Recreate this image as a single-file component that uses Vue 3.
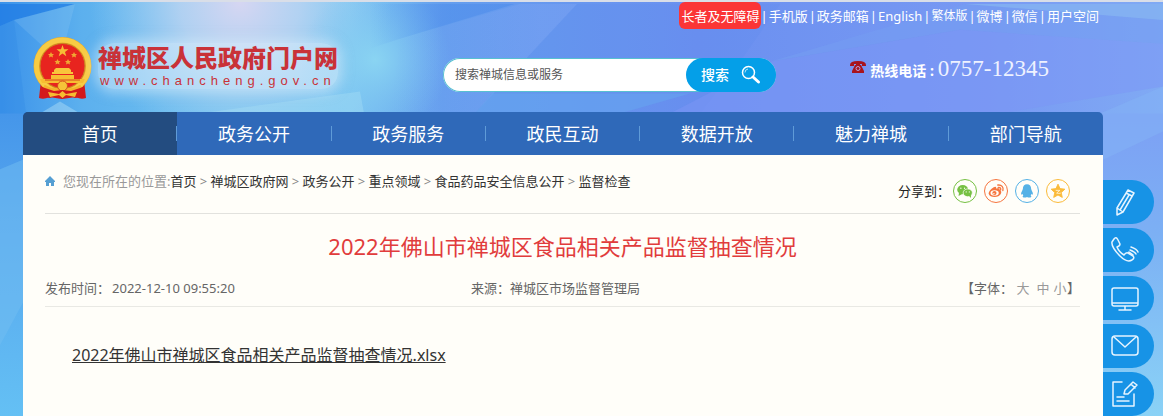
<script setup>
import { ref } from 'vue'

const keyword = ref('')
const topLinks = [
  { text: '手机版' },
  { text: '政务邮箱' },
  { text: 'English' },
  { text: '繁体版', small: true },
  { text: '微博' },
  { text: '微信' },
  { text: '用户空间' },
]
const navItems = ['首页', '政务公开', '政务服务', '政民互动', '数据开放', '魅力禅城', '部门导航']
const crumbs = ['首页', '禅城区政府网', '政务公开', '重点领域', '食品药品安全信息公开', '监督检查']
</script>

<template>
  <div class="page">
    <svg class="backdrop" viewBox="0 0 1163 416" preserveAspectRatio="none" aria-hidden="true">
      <defs>
        <linearGradient id="sky" x1="0" y1="0" x2="1" y2="0">
          <stop offset="0" stop-color="#3b92ea" />
          <stop offset="0.07" stop-color="#5cb0ee" />
          <stop offset="0.2" stop-color="#74c4f0" />
          <stop offset="0.3" stop-color="#7cc6f2" />
          <stop offset="0.38" stop-color="#649eee" />
          <stop offset="0.6" stop-color="#6b90f0" />
          <stop offset="0.85" stop-color="#7899f3" />
          <stop offset="1" stop-color="#80aaf4" />
        </linearGradient>
        <radialGradient id="lilac" cx="240" cy="0" r="150" gradientUnits="userSpaceOnUse">
          <stop offset="0" stop-color="#d6d6f2" />
          <stop offset="0.4" stop-color="#bcd4f2" stop-opacity="0.85" />
          <stop offset="1" stop-color="#a0d0f2" stop-opacity="0" />
        </radialGradient>
        <radialGradient id="aqua" cx="375" cy="58" r="75" gradientUnits="userSpaceOnUse">
          <stop offset="0" stop-color="#8ad4f2" />
          <stop offset="1" stop-color="#7cc4f0" stop-opacity="0" />
        </radialGradient>
        <linearGradient id="facetFade" x1="390" y1="0" x2="540" y2="0" gradientUnits="userSpaceOnUse">
          <stop offset="0" stop-color="#80a6f4" stop-opacity="0" />
          <stop offset="1" stop-color="#80a6f4" stop-opacity="0.35" />
        </linearGradient>
        <linearGradient id="cornerFade" x1="370" y1="0" x2="450" y2="0" gradientUnits="userSpaceOnUse">
          <stop offset="0" stop-color="#4486ea" stop-opacity="0" />
          <stop offset="1" stop-color="#4486ea" stop-opacity="0.4" />
        </linearGradient>
        <linearGradient id="leftEdge" x1="0" y1="0" x2="0" y2="1">
          <stop offset="0" stop-color="#4596ea" />
          <stop offset="0.4" stop-color="#58a8ee" />
          <stop offset="1" stop-color="#64c0f4" />
        </linearGradient>
        <linearGradient id="rightEdge" x1="0" y1="0" x2="0" y2="1">
          <stop offset="0" stop-color="#7da0f4" />
          <stop offset="0.4" stop-color="#7cb0f4" />
          <stop offset="1" stop-color="#8ad2f6" />
        </linearGradient>
      </defs>
      <rect width="1163" height="416" fill="url(#sky)" />
      <rect y="112" width="24" height="304" fill="url(#leftEdge)" />
      <rect x="1100" y="112" width="63" height="304" fill="url(#rightEdge)" />
      <rect width="480" height="160" fill="url(#lilac)" />
      <rect x="290" width="180" height="140" fill="url(#aqua)" />
      <path d="M0 2H75L14 18L0 24Z" fill="#1b78e4" opacity="0.65" />
      <path d="M14 18L75 2L60 60Z" fill="#9fd4f6" opacity="0.2" />
      <path d="M0 24L14 18L26 112H0Z" fill="#2f88e6" opacity="0.3" />
      <path d="M60 100L80 112H40Z" fill="#bfe6f8" opacity="0.4" />
      <path d="M200 112L360 90L364 112Z" fill="#a8def4" opacity="0.4" />
      <path d="M400 37L520 2H577L475 112H390Z" fill="url(#facetFade)" />
      <path d="M577 2L475 112H700L740 60L780 2Z" fill="#5a86ee" opacity="0.15" />
      <path d="M360 2H515L400 37L360 50Z" fill="url(#cornerFade)" />
      <path d="M475 112L492 92H690L620 112Z" fill="#66a8f0" opacity="0.5" />
      <path d="M770 60L965 2H1163V42L960 28Z" fill="#749cf2" opacity="0.6" />
      <path d="M770 60L960 28L1163 42V85L1000 112H670Z" fill="#7b96f5" opacity="0.5" />
      <path d="M965 2L1163 18V2Z" fill="#8abaf2" opacity="0.6" />
      <path d="M1163 85L1100 112V160L1163 130Z" fill="#84b4f6" opacity="0.5" />
      <path d="M0 168L24 158V300L0 345Z" fill="#72bdf2" opacity="0.5" />
    </svg>

    <header class="header">
      <nav class="topbar" aria-label="快捷入口">
        <a class="care" href="#">长者及无障碍</a>
        <template v-for="link in topLinks" :key="link.text">
          <span class="bar">|</span>
          <a href="#" :class="{ small: link.small }">{{ link.text }}</a>
        </template>
      </nav>

      <div class="brand-row">
        <a class="brand" href="#">
          <svg class="emblem" viewBox="0 0 62 62" aria-hidden="true">
            <path d="M9 43L7 61Q12 63 17 60L30 62L44 60Q49 63 54 61L52 43Z" fill="#d3191c" />
            <path d="M10 45L13 60M50 45L48 60" stroke="#9c1416" stroke-width="1" />
            <circle cx="30.500" cy="29" r="29" fill="#eaa92b" />
            <circle cx="30.500" cy="29" r="26" fill="none" stroke="#f8cc44" stroke-width="5" />
            <circle cx="30.500" cy="29" r="22.500" fill="#e8241f" stroke="#c98420" />
            <path d="M30.500 8L32 12.300H36.500L33 15L34.300 19.200L30.500 16.600L26.700 19.200L28 15L24.500 12.300H29Z" fill="#f6bd35" />
            <path d="M19 15l1 2h2l-1.500 1.500.5 2-2-1-2 1 .5-2L16 17h2ZM42 15l1 2h2l-1.500 1.500.5 2-2-1-2 1 .5-2L39 17h2ZM25.500 22l1 2h2L27 25.500l.5 2-2-1-2 1 .5-2L22.500 24h2ZM36 22l1 2h2l-1.500 1.500.5 2-2-1-2 1 .5-2L33 24h2Z" fill="#f0a733" />
            <path d="M22 33L24 31H37L39 33V35H41V37H20V35H22Z" fill="#f9c53b" />
            <path d="M19 38H42V42H53L51 46H10L8 42H19Z" fill="#f7bd32" />
            <path d="M13 43H48" stroke="#d64a1d" stroke-width="1" />
            <path d="M12 49Q24 56 30.500 50Q37 56 49 49" fill="none" stroke="#f4b32c" stroke-width="3" />
            <circle cx="30.500" cy="49" r="5" fill="#f5c338" stroke="#d8491e" />
            <path d="M10 50L22 54L30.500 53L39 54L51 50L50 60L43 61L34 57L30.500 59L27 57L18 61L11 60Z" fill="#d3191c" />
            <path d="M16 55L27 57L30.500 54L34 57L45 55L43 60L34 58L30.500 61L27 58L18 60Z" fill="#f6bc31" />
          </svg>
          <span class="brand-text">
            <strong>禅城区人民政府门户网</strong>
            <span class="domain">www.chancheng.gov.cn</span>
          </span>
        </a>

        <form class="search" @submit.prevent>
          <input v-model="keyword" type="text" aria-label="搜索禅城信息或服务" placeholder="搜索禅城信息或服务" />
          <button type="submit">
            搜索
            <svg viewBox="0 0 20 20" width="20" height="20" aria-hidden="true">
              <circle cx="7.500" cy="7.500" r="6" fill="none" stroke="#fff" stroke-width="1.500" />
              <path d="M4 7.500A3.500 3.500 0 0 1 7 4" fill="none" stroke="#fff" stroke-opacity=".7" />
              <path d="M12 12L17.500 17" stroke="#fff" stroke-width="3" stroke-linecap="round" />
            </svg>
          </button>
        </form>

        <p class="hotline">
          <svg viewBox="0 0 16 12" width="16" height="12" aria-hidden="true">
            <path d="M0 4Q0 0 8 0T16 4V5H12V3H4V5H0Z" fill="#a8141e" />
            <path d="M5 4H6V3H10V4H11L14 10V12H2V10Z" fill="#a8141e" />
            <circle cx="8" cy="7.500" r="2" fill="none" stroke="#b9a0dc" />
          </svg>
          <b>热线电话 :</b>
          <span class="number">0757-12345</span>
        </p>
      </div>
    </header>

    <div class="content">
      <main class="main">
        <nav class="nav" aria-label="主导航">
          <a v-for="(item, i) in navItems" :key="item" href="#" :class="{ active: i === 0 }"><span>{{ item }}</span></a>
        </nav>

        <article class="card">
          <div class="crumb-row">
            <nav class="crumbs" aria-label="当前位置">
              <svg viewBox="0 0 10 10" width="10" height="10" aria-hidden="true">
                <path d="M5 0L10 5V6H9V10H6V7H4V10H1V6H0V5Z" fill="#559fd3" />
              </svg>
              <span class="where">您现在所在的位置:</span>
              <template v-for="(crumb, i) in crumbs" :key="crumb">
                <span v-if="i" class="gt">&gt;</span>
                <a href="#">{{ crumb }}</a>
              </template>
            </nav>
            <div class="share">
              <span>分享到：</span>
              <button type="button" class="wechat" aria-label="分享到微信">
                <svg viewBox="0 0 24 24">
                  <ellipse cx="9.500" cy="10.500" rx="6" ry="5" fill="currentColor" />
                  <path d="M5.500 13L5 17.500L9.500 15Z" fill="currentColor" />
                  <ellipse cx="15" cy="14" rx="5" ry="4.300" fill="currentColor" stroke="#fffef9" stroke-width=".8" />
                  <path d="M16 17L18.500 19.500V16Z" fill="currentColor" />
                  <g fill="#fffef9"><circle cx="7.500" cy="9" r=".7" /><circle cx="11.500" cy="9" r=".7" /><circle cx="13.300" cy="13" r=".6" /><circle cx="16.700" cy="13" r=".6" /></g>
                </svg>
              </button>
              <button type="button" class="weibo" aria-label="分享到微博">
                <svg viewBox="0 0 24 24">
                  <path d="M10.500 7.500C12 7 12.500 8 12 9.500C14 8.500 16.500 9 16 11C19 12 18 16 14.500 17.700C11 19.300 4.800 18.600 4 15C3.500 12.500 8 8 10.500 7.500Z" fill="currentColor" />
                  <ellipse cx="10.500" cy="14.200" rx="4.500" ry="3" fill="#fffef9" />
                  <circle cx="10.300" cy="14.300" r="2.300" fill="currentColor" />
                  <circle cx="9.700" cy="15" r=".8" fill="#fffef9" />
                  <path d="M14 5.500C18 4.800 20.700 8 19.500 11.500M14.500 8.200C16.600 7.800 17.600 9.200 17 11" fill="none" stroke="currentColor" stroke-width="1.500" stroke-linecap="round" />
                </svg>
              </button>
              <button type="button" class="qq" aria-label="分享到QQ">
                <svg viewBox="0 0 24 24">
                  <path d="M12 4.500C15 4.500 16.500 6.500 16.500 9.500C16.500 11 18.500 13 18.500 15.500C18 16.500 17 15.500 16.800 15C16.700 16 16 16.700 16 16.900C18.500 19 14 19.800 12 18.500C10 19.800 5.500 19 8 16.900C8 16.700 7.300 16 7.200 15C7 15.500 6 16.500 5.500 15.500C5.500 13 7.500 11 7.500 9.500C7.500 6.500 9 4.500 12 4.500Z" fill="currentColor" />
                </svg>
              </button>
              <button type="button" class="qzone" aria-label="分享到QQ空间">
                <svg viewBox="0 0 24 24">
                  <path d="M12 4.500L14.200 9.400L19.500 10L15.500 13.700L16.700 19L12 16.300L7.300 19L8.500 13.700L4.500 10L9.800 9.400Z" fill="currentColor" stroke="currentColor" stroke-linejoin="round" />
                  <path d="M9.500 11.300H14L10.500 14.300Q13 15 15 14.300" fill="none" stroke="#fffef9" stroke-width=".8" />
                </svg>
              </button>
            </div>
          </div>

          <h1>2022年佛山市禅城区食品相关产品监督抽查情况</h1>

          <div class="meta">
            <span>发布时间：<time datetime="2022-12-10T09:55:20">2022-12-10 09:55:20</time></span>
            <span class="source">来源：禅城区市场监督管理局</span>
            <span class="sizes">【字体：<button type="button">大</button><button type="button">中</button><button type="button">小</button>】</span>
          </div>

          <p class="attachment"><a href="#">2022年佛山市禅城区食品相关产品监督抽查情况.xlsx</a></p>
        </article>
      </main>

      <aside class="tools" aria-label="互动工具">
        <button type="button" aria-label="写信">
          <svg viewBox="0 0 28 28"><path d="M17 2L23 5L12 24L6 27L6 20ZM15 5L21 8M6 20L12 24M9 22L18 7" /></svg>
        </button>
        <button type="button" aria-label="电话">
          <svg viewBox="0 0 28 28"><path d="M3 3Q5 0 7 4L9 8Q9 10 6 11Q8 16 13 19Q15 16 17 17L22 20Q24 22 21 24Q16 27 9 20Q0 11 1 6ZM20 11Q26 13 27 16M19 14Q24 16 25 18M18 16Q21 18 22 19" /></svg>
        </button>
        <button type="button" aria-label="在线服务">
          <svg viewBox="0 0 28 28"><path d="M3 4H25Q27 4 27 6V20Q27 22 25 22H3Q1 22 1 20V6Q1 4 3 4ZM1 19H27M14 22V26M8 26H20" /></svg>
        </button>
        <button type="button" aria-label="邮箱">
          <svg viewBox="0 0 28 28"><path d="M4 4H24Q27 4 27 7V20Q27 23 24 23H4Q1 23 1 20V7Q1 4 4 4ZM3 5L14 15L25 5" /></svg>
        </button>
        <button type="button" aria-label="意见征集">
          <svg viewBox="0 0 28 28"><path d="M11 2H2V26H23V14M6 17H13M6 21H18M14 10L22 2L26 5L17 14H13ZM20 4L24 8" /></svg>
        </button>
      </aside>
    </div>
  </div>
</template>

<style>
body {
  margin: 0;
}
</style>

<style scoped>
.page {
  position: relative;
  display: flex;
  flex-direction: column;
  min-height: 100vh;
  overflow: hidden;
  box-sizing: border-box;
  border-top: 2px solid #d9dee8;
  background: #6ea8f2;
  font: 13px/20px "Noto Sans", "Noto Sans CJK SC", sans-serif;
  color: #333;
}
.backdrop {
  position: absolute;
  inset: 0;
  width: 100%;
  height: 100%;
}
a {
  color: inherit;
  text-decoration: none;
}
button {
  padding: 0;
  border: 0;
  background: none;
  font: inherit;
  color: inherit;
  cursor: pointer;
}
.header {
  position: relative;
  padding: 0 60px 0 23px;
}
.topbar {
  display: flex;
  justify-content: flex-end;
  align-items: center;
  gap: 1px;
  height: 27px;
  padding-right: 4px;
  color: #fff;
}
.care {
  padding: 4px 2px 3px;
  margin-right: -2px;
  border-radius: 6px;
  background: #fb3536;
}
.small {
  font-size: 12px;
}
.brand-row {
  display: flex;
  align-items: flex-start;
  height: 83px;
}
.brand {
  display: flex;
  flex: none;
  width: 411px;
  padding: 8px 0 0 9px;
}
.emblem {
  width: 62px;
  height: 62px;
}
.brand-text {
  display: flex;
  flex-direction: column;
  align-self: flex-start;
  margin: 6px 0 0 4px;
  border-radius: 16px;
  background: rgba(222, 240, 252, 0.5);
  box-shadow: 0 0 12px 4px rgba(222, 240, 252, 0.5);
  color: #c93238;
}
.brand-text strong {
  font-size: 24px;
  line-height: 30px;
  font-weight: 900;
}
.domain {
  padding-left: 2px;
  font: 13px/16px "Liberation Sans", sans-serif;
  letter-spacing: 5px;
}
.search {
  display: flex;
  width: 333px;
  height: 34px;
  margin-top: 29px;
  border-radius: 17px;
  background: #fff;
  box-shadow: inset 0 0 0 1px #58c0d0;
}
.search input {
  flex: 1;
  min-width: 0;
  padding: 0 12px;
  border: 0;
  outline: 0;
  background: none;
  font: 12px/20px "Noto Sans", "Noto Sans CJK SC", sans-serif;
  color: #555;
}
.search input::placeholder {
  color: #555;
  opacity: 1;
}
.search button {
  display: flex;
  align-items: center;
  justify-content: center;
  gap: 12px;
  width: 90px;
  border-radius: 17px;
  background: #049fe8;
  font-size: 14px;
  font-weight: 500;
  color: #fff;
}
.hotline {
  display: flex;
  align-items: baseline;
  gap: 4px;
  margin: 26px 54px 0 auto;
  color: #fff;
}
.hotline svg {
  align-self: flex-start;
  margin-top: 6px;
}
.hotline b {
  font-size: 14px;
}
.number {
  font: 23px/28px "Liberation Serif", serif;
  color: #eef2ff;
}
.content {
  position: relative;
  display: grid;
  grid-template-columns: 23px minmax(0, 1fr) 60px;
  flex: 1;
}
.main {
  grid-column: 2;
  display: flex;
  flex-direction: column;
}
.nav {
  display: flex;
  height: 43px;
  border-radius: 5px 5px 0 0;
  overflow: hidden;
  background: #2f69b9;
}
.nav a {
  flex: 1;
  display: flex;
  align-items: center;
  font-size: 18px;
  color: #fff;
}
.nav a span {
  flex: 1;
  text-align: center;
}
.nav a:not(:last-child)::after {
  content: "";
  width: 1px;
  height: 15px;
  background: #5f9bd8;
}
.nav .active {
  background: #234c80;
}
.card {
  flex: 1;
  padding: 0 23px 40px 22px;
  background: #fffef9;
}
.crumb-row {
  display: flex;
  justify-content: space-between;
  align-items: flex-start;
  height: 58px;
  border-bottom: 1px solid #e2e2de;
}
.crumbs {
  display: flex;
  align-items: center;
  margin-top: 16px;
}
.where {
  margin-left: 8px;
  color: #999;
}
.gt {
  width: 14px;
  text-align: center;
  color: #888;
}
.share {
  display: flex;
  align-items: center;
  gap: 7px;
  margin: 24px 10px 0 0;
  color: #222;
}
.share span {
  margin-right: -4px;
}
.share button {
  width: 24px;
  height: 24px;
  box-sizing: border-box;
  border: 1px solid currentColor;
  border-radius: 50%;
}
.share svg {
  display: block;
  width: 22px;
  height: 22px;
}
.wechat { color: #76c043; }
.weibo { color: #f6753f; }
.qq { color: #54b1e6; }
.qzone { color: #fbbb3a; }
h1 {
  margin: 16px 0 0;
  font-size: 22px;
  line-height: 32px;
  font-weight: 400;
  text-align: center;
  color: #e13c3c;
}
.meta {
  display: grid;
  grid-template-columns: 1fr auto 1fr;
  height: 36px;
  padding-top: 8px;
  align-items: center;
  border-bottom: 1px solid #e9e9e4;
  color: #666;
}
.meta time {
  margin-left: 2px;
}
.source {
  padding-right: 14px;
}
.sizes {
  justify-self: end;
}
.sizes button {
  width: 20px;
  color: #999;
}
.sizes button:last-child {
  width: 14px;
}
.attachment {
  margin: 35px 0 0 27px;
  font-size: 16px;
  line-height: 26px;
}
.attachment a {
  text-decoration: underline;
}
.tools {
  display: flex;
  flex-direction: column;
  gap: 4px;
  height: 0;
  padding-top: 68px;
}
.tools button {
  flex: none;
  display: flex;
  align-items: center;
  width: 51px;
  height: 44px;
  padding-left: 8px;
  border-radius: 0 22px 22px 0;
  background: #1793e6;
}
.tools svg {
  width: 28px;
  height: 28px;
  fill: none;
  stroke: #e6f4ff;
  stroke-width: 1.500;
  stroke-linejoin: round;
  stroke-linecap: round;
}
</style>
